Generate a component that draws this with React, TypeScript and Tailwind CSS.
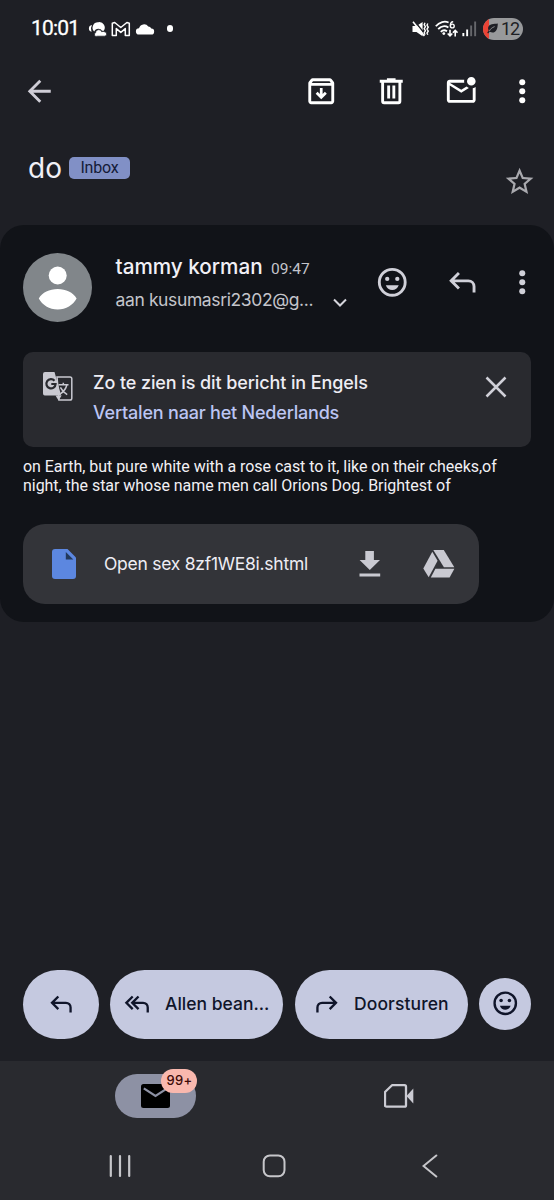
import type { ReactNode } from "react";

interface IconProps {
  size?: number;
  className?: string;
  children: ReactNode;
}

function Icon({ size = 34.5, className = "", children }: IconProps) {
  return (
    <svg width={size} height={size} viewBox="0 0 24 24" fill="currentColor" className={`shrink-0 ${className}`}>
      {children}
    </svg>
  );
}

/* ─── Shared icons ─── */
function MoreIcon() {
  return (
    <Icon>
      <circle cx="12" cy="5.8" r="2.1" />
      <circle cx="12" cy="12" r="2.1" />
      <circle cx="12" cy="18.2" r="2.1" />
    </Icon>
  );
}

function SmileIcon({ size }: { size?: number }) {
  return (
    <Icon size={size}>
      <circle cx="12" cy="12" r="9" fill="none" stroke="currentColor" strokeWidth="2" />
      <circle cx="8.5" cy="9.7" r="1.5" />
      <circle cx="15.5" cy="9.7" r="1.5" />
      <path d="M7.5 14h9c-.7 2-2.4 3.4-4.5 3.4S8.2 16 7.5 14z" />
    </Icon>
  );
}

function ReplyIcon({ size, className }: { size?: number; className?: string }) {
  return (
    <Icon size={size} className={className}>
      <path d="M9.7 5.6 4.3 11l5.4 5.4M4.3 11h11.9c2.3 0 4 1.7 4 4v4.2" fill="none" stroke="currentColor" strokeWidth="2" />
    </Icon>
  );
}

/* ─── Status bar ─── */
function StatusBar() {
  return (
    <div className="flex h-[57px] shrink-0 items-center pl-[31px] pr-[31px] text-white">
      <span className="w-[56.5px] text-[21px] leading-none tracking-[-0.8px] [-webkit-text-stroke:0.3px_white]">10:01</span>
      <svg width="20" height="18" viewBox="0 0 20 18" fill="currentColor" className="shrink-0">
        <path d="M4 5a3.6 3.6 0 0 0-3.1 3.6c0 1.700 1 2.900 2.600 3.300A7.500 7.500 0 0 1 4 5z" />
        <path d="M10.300 2.200a5.500 5.500 0 0 0-4.100 9.400c.600-1.700 2.200-2.900 4.200-2.900 1.600 0 3 .900 3.600 2.200.500-.100 1.100 0 1.500.200a5.500 5.500 0 0 0-5.200-8.900z" />
        <path d="M9.300 16.200h7a2.200 2.200 0 0 0 .300-4.400c-.900-.500-2-.500-2.900-.100a3.200 3.200 0 0 0-6.200 1.100 1.900 1.900 0 0 0 1.800 3.400z" stroke="#1e1f25" strokeWidth=".700" />
      </svg>
      <svg width="20" height="18" viewBox="0 0 20 18" fill="none" stroke="currentColor" strokeWidth="1.5" strokeLinejoin="round" className="ml-[3px] shrink-0">
        <path d="M1.300 3.200v12.200h4V8.600l4.500 3.800 4.500-3.800v6.800h4V3.200l-2.400-.700-6.100 5-6.100-5z" />
      </svg>
      <svg width="20" height="18" viewBox="0 0 20 18" fill="currentColor" className="ml-[4px] shrink-0">
        <path d="M4 14.500h12a3 3 0 0 0 .300-6 3.500 3.500 0 0 0-3-1.900A5.200 5.200 0 0 0 4 8.300a3.100 3.100 0 0 0 0 6.200z" />
      </svg>
      <span className="ml-[12px] size-[6.5px] rounded-full bg-white" />

      <div className="ml-auto flex items-center">
        <svg width="17" height="16" viewBox="0 0 17 16" fill="currentColor" className="shrink-0">
          <path d="M.5 5h4l6.100-4v14.200L4.500 11h-4z" />
          <path d="M2.500 0 14 14.500" stroke="#1e1f25" strokeWidth="1.400" />
          <path d="M1 .8 12.400 15" stroke="currentColor" strokeWidth="1.600" />
          <path d="m13 1.800-.800 1.900 1.200 2-1.200 2 1.200 2-1.200 2 .800 2M15.800 2.500l-.800 1.600 1.200 2-1.200 2 1.200 2-1.200 2 .800 1.600" fill="none" stroke="currentColor" strokeWidth="1.400" />
        </svg>
        <svg width="23" height="18" viewBox="0 0 23 18" fill="none" stroke="currentColor" strokeWidth="1.8" className="ml-[6px] shrink-0">
          <path d="M.8 6.2C4.4 1.8 9.8.8 13.6 2.5M3.2 9.1c2.8-3.2 7-3.7 10.2-1.7M5.8 11.8c1.8-1.8 4.3-1.9 6.2-.6" />
          <circle cx="8.8" cy="13.6" r="1.4" fill="currentColor" stroke="none" />
          <path d="M18.2 1.8c-2 0-3 1.7-2.8 4" strokeWidth="1.4" />
          <circle cx="17.3" cy="6" r="1.9" strokeWidth="1.4" />
          <path d="M15 9.800v6M12.700 13.500l2.300 2.400 2.300-2.400M20.200 16.500v-6M17.900 12.700l2.300-2.400 2.300 2.400" strokeWidth="1.600" />
        </svg>
        <svg width="15" height="16" viewBox="0 0 15 16" fill="currentColor" className="ml-[4px] shrink-0">
          <rect x=".4" y="12" width="1.900" height="3.200" />
          <rect x="4.200" y="8.500" width="1.900" height="6.700" />
          <rect x="8.200" y="4.500" width="1.900" height="10.700" fill="#66676b" />
          <rect x="12.200" y=".5" width="1.900" height="14.700" fill="#66676b" />
        </svg>
        <div className="ml-[6px] flex h-[22px] w-[40px] items-center overflow-hidden rounded-full bg-[#98999b]">
          <span className="h-full w-[6px] shrink-0 bg-[#ea4335]" />
          <svg width="11" height="11" viewBox="0 0 11 11" className="-ml-[2px] shrink-0" fill="#1e1f25">
            <path d="M10.8.4C7 1 2 .5 1.2 4.3c-.3 1.3 0 2.3.5 3L.2 9.8l1 .8 1.5-1.8c4.9 2 8-.8 8.1-8.4z" />
            <path d="M2.3 8.2C3.2 6 5 4.6 7.6 3.6" stroke="#98999b" strokeWidth=".9" fill="none" />
          </svg>
          <span className="ml-[3px] pt-px text-[18px] leading-none tracking-[-1.2px] text-[#1e1f25]">12</span>
        </div>
      </div>
    </div>
  );
}

/* ─── Toolbar ─── */
function Toolbar() {
  return (
    <header className="flex h-[69px] shrink-0 items-center pl-[22px] pr-[14.5px] text-white">
      <Icon className="text-[#cfcdd6]">
        <path d="M20 11H7.83l5.59-5.59L12 4l-8 8 8 8 1.41-1.41L7.83 13H20v-2z" />
      </Icon>
      <div className="ml-auto flex items-center">
        <Icon>
          <path
            fillRule="evenodd"
            d="M20.54 5.23l-1.39-1.68C18.88 3.21 18.47 3 18 3H6c-.47 0-.88.21-1.16.55L3.46 5.23C3.17 5.57 3 6.02 3 6.5V19c0 1.1.9 2 2 2h14c1.1 0 2-.9 2-2V6.5c0-.48-.17-.93-.46-1.27zM6.24 5h11.52l.83 1.2H5.42L6.24 5zM5 19V8.2h14V19H5z"
          />
          <path d="M12 9.8v6M8.8 13l3.200 3.200 3.200-3.200" fill="none" stroke="currentColor" strokeWidth="1.900" />
        </Icon>
        <Icon className="ml-[35.3px]">
          <path d="M9 3h6v1h5v2H4V4h5z" />
          <path d="M6 5.500V19c0 .600.400 1 1 1h10c.600 0 1-.400 1-1V5.500M10.200 8v9M13.800 8v9" fill="none" stroke="currentColor" strokeWidth="2" />
        </Icon>
        <Icon className="ml-[35.5px]">
          <path d="M22 8.98V18c0 1.1-.9 2-2 2H4c-1.1 0-2-.9-2-2V6c0-1.1.9-2 2-2h10.1c-.06.32-.1.66-.1 1s.04.68.1 1H4l8 5 3.67-2.29c.47.43 1.02.76 1.63.98L12 13 4 8v10h16V9.9c.74-.15 1.42-.48 2-.92zM16 5c0 1.66 1.34 3 3 3s3-1.34 3-3-1.34-3-3-3-3 1.34-3 3z" />
        </Icon>
        <div className="ml-[26.7px]">
          <MoreIcon />
        </div>
      </div>
    </header>
  );
}

function Subject() {
  return (
    <div className="flex h-[99px] shrink-0 items-start pl-[28px] pr-[18px]">
      <h1 className="mt-[24px] w-[41px] font-[Inter] text-[28px] leading-[36px] text-[#f1f0f6]">do</h1>
      <span className="mt-[31px] flex h-[22px] w-[61px] items-center justify-center rounded-[5px] bg-[#8190c6] text-[16px] tracking-[-0.2px] text-[#151b38]">
        Inbox
      </span>
      <Icon size={33.2} className="mt-[39px] ml-auto text-[#a9a9ae]">
        <path d="M22 9.24l-7.19-.62L12 2 9.19 8.63 2 9.24l5.46 4.73L5.82 21 12 17.27 18.18 21l-1.63-7.03L22 9.24zM12 15.4l-3.76 2.27 1-4.28-3.32-2.88 4.38-.38L12 6.1l1.71 4.04 4.38.38-3.32 2.88 1 4.28L12 15.4z" />
      </Icon>
    </div>
  );
}

/* ─── Message card ─── */
function SenderRow() {
  return (
    <div className="flex h-[69px] items-start">
      <svg width="69" height="69" viewBox="0 0 69 69" className="shrink-0">
        <circle cx="34.5" cy="34.5" r="34.5" fill="#81868a" />
        <circle cx="34.7" cy="22.5" r="9" fill="#fff" />
        <path d="M15.8 45.5c3.4-6 10.6-9.5 18.9-9.5s15.5 3.5 18.9 9.5c-3.4 6.4-10.6 11-18.900 11s-15.500-4.600-18.900-11z" fill="#fff" />
      </svg>
      <div className="ml-[23.5px] w-[234px] pt-[1px] whitespace-nowrap">
        <div className="flex h-[25px] items-baseline">
          <span className="w-[155.5px] font-[Inter] text-[20.7px] leading-[25px] font-medium text-[#f1f0f6]">tammy korman</span>
          <span className="text-[15.5px] text-[#c4c5cb]">09:47</span>
        </div>
        <div className="mt-[9px] flex items-center">
          <span className="w-[213.5px] font-[Inter] text-[17.5px] leading-[24px] tracking-[-0.38px] text-[#c4c5cb]">aan kusumasri2302@g...</span>
          <svg width="16" height="10" viewBox="0 0 16 10" fill="none" stroke="#d5d5dc" strokeWidth="2" className="mt-[5px] ml-[3px] shrink-0">
            <path d="m2 1.5 6 6 6-6" />
          </svg>
        </div>
      </div>
      <div className="ml-auto flex items-center pt-[12px] text-[#d0d0d8]">
        <SmileIcon />
        <ReplyIcon className="ml-[35.5px]" />
        <div className="ml-[26px]">
          <MoreIcon />
        </div>
      </div>
    </div>
  );
}

function TranslateBanner() {
  return (
    <div className="mr-[8.5px] flex h-[95px] rounded-[10px] bg-[#292a2f]">
      <svg width="30" height="30" viewBox="0 0 30 30" className="mt-[20px] ml-[20px] shrink-0">
        <path d="M14 5h13c1 0 1.8.8 1.8 1.8v19.4c0 1-.8 1.8-1.8 1.8H16z" fill="none" stroke="#c9c9d1" strokeWidth="1.5" />
        <path d="M2 0h9.500l6.700 23.500h-16A2 2 0 0 1 0 21.500V2a2 2 0 0 1 2-2z" fill="#c9c9d1" />
        <path d="m12.500 23.500 3 5 3.200-5z" fill="#c9c9d1" />
        <path d="M11.500 8.800A4.600 4.600 0 1 0 12.600 12H8.300" fill="none" stroke="#292a2f" strokeWidth="2.200" />
        <path d="M15.500 12.800h10M20.300 10.800v2M23.800 13c-.8 4-3.8 7-6.600 9M17.400 15.400c1.200 2.600 4 5.400 6.800 7.200" fill="none" stroke="#c9c9d1" strokeWidth="1.5" />
      </svg>
      <div className="ml-[20px] pt-[16px] font-[Inter] text-[18px] leading-[30px] font-medium whitespace-nowrap">
        <p className="tracking-[-0.1px] text-[#eeedf4]">Zo te zien is dit bericht in Engels</p>
        <p className="tracking-[-0.2px] text-[#bcc5f3]">Vertalen naar het Nederlands</p>
      </div>
      <svg width="22" height="22" viewBox="0 0 22 22" fill="none" stroke="#d0d0d8" strokeWidth="2.5" className="mt-[24px] mr-[24.5px] ml-auto shrink-0">
        <path d="m1.5 1.5 19 19m0-19-19 19" />
      </svg>
    </div>
  );
}

function Attachment() {
  return (
    <div className="mt-[29px] flex h-[80px] w-[456px] items-center rounded-[22px] bg-[#333439]">
      <svg width="24" height="30" viewBox="0 0 24 30" className="ml-[28.5px] shrink-0">
        <path d="M3 0h12.5L24 8.5V27a3 3 0 0 1-3 3H3a3 3 0 0 1-3-3V3a3 3 0 0 1 3-3z" fill="#5c87e0" />
        <path d="M13.8 3v7.500h7.500z" fill="#23395c" />
      </svg>
      <span className="ml-[28.5px] w-[250px] font-[Inter] text-[17.5px] tracking-[-0.26px] whitespace-nowrap text-[#eeedf4]">
        Open sex 8zf1WE8i.shtml
      </span>
      <svg width="22" height="26" viewBox="0 0 22 26" fill="#c9c9d1" className="ml-[4.5px] shrink-0">
        <path d="M6.300 0h8.600v9H21L10.800 19 .600 9h5.700zM.500 22.400h20.700v3.100H.500z" />
      </svg>
      <svg width="32" height="28" viewBox="0 0 32 28" fill="#c9c9d1" className="ml-[42px] shrink-0">
        <path d="M10.300 0h10.500l10.500 17.300H20.900z" />
        <path d="M9.300 1.700 14.600 10.700 5.700 27.300.300 18.500z" />
        <path d="M12.400 18.700h19L26.600 27.500H7.800z" />
      </svg>
    </div>
  );
}

/* ─── Bottom actions ─── */
function ReplyActions() {
  return (
    <div className="flex h-[69px] shrink-0 items-center px-[23px] font-[Inter] text-[17.5px] font-medium text-[#10152a]">
      <button className="flex h-full w-[76px] items-center justify-center rounded-full bg-[#c5c9e0]">
        <ReplyIcon size={28} />
      </button>
      <button className="ml-[11px] flex h-full w-[173px] items-center rounded-full bg-[#c5c9e0] pl-[13px] whitespace-nowrap">
        <svg width="28" height="28" viewBox="0 0 24 24" fill="none" stroke="currentColor" strokeWidth="2" className="shrink-0">
          <path d="M8.300 5.600 2.900 11l5.400 5.400M13.300 5.600 7.900 11l5.400 5.400M7.900 11h9.300c2.300 0 4 1.700 4 4v4.200" />
        </svg>
        <span className="ml-[14px]">Allen bean...</span>
      </button>
      <button className="ml-[11.5px] flex h-full w-[173.5px] items-center rounded-full bg-[#c5c9e0] pl-[18.5px]">
        <ReplyIcon size={28} className="-scale-x-100" />
        <span className="ml-[13px] tracking-[0.1px]">Doorsturen</span>
      </button>
      <button className="mb-px ml-[11px] flex size-[52px] items-center justify-center rounded-full bg-[#c5c9e0]">
        <SmileIcon size={28.5} />
      </button>
    </div>
  );
}

function BottomNav() {
  return (
    <nav className="mt-[22.5px] flex h-[139px] shrink-0 flex-col bg-[#292a2f]">
      <div className="flex pt-[13px]">
        <div className="relative ml-[115px] flex h-[43.5px] w-[81px] items-center justify-center rounded-full bg-[#8d91a4]">
          <svg width="29" height="24" viewBox="0 0 29 24">
            <rect width="29" height="24" rx="2.5" fill="#000" />
            <path d="m2.800 4.300 11.700 7.700 11.700-7.700" fill="none" stroke="#8d91a4" strokeWidth="2.200" />
          </svg>
          <span className="absolute -top-[5px] left-[46px] flex h-[24px] w-[36px] items-center justify-center rounded-full bg-[#f9b8ae] pl-px font-[Inter] text-[13px] font-medium tracking-[0.3px] text-[#3d0a08]">
            99+
          </span>
        </div>
        <svg width="30" height="24" viewBox="0 0 30 24" className="mt-[9.5px] ml-[188px] text-[#cbcbd3]">
          <path d="M8 1.200h12.500c.9 0 1.500.6 1.500 1.500v18.500c0 .9-.6 1.500-1.500 1.500h-18c-.9 0-1.500-.6-1.500-1.500V8z" fill="none" stroke="currentColor" strokeWidth="2.300" strokeLinejoin="round" />
          <path d="m22.500 12 6.800-7.500v15z" fill="currentColor" />
        </svg>
      </div>

      {/* System navigation */}
      <div className="mt-[36px] flex h-[24px] items-center text-[#c6c6ca]">
        <svg width="22" height="24" viewBox="0 0 22 24" fill="none" stroke="currentColor" strokeWidth="2.2" strokeLinecap="round" className="ml-[108.5px]">
          <path d="M1.800 2v20M11 2v20M20.200 2v20" />
        </svg>
        <svg width="24" height="24" viewBox="0 0 24 24" fill="none" stroke="currentColor" strokeWidth="2" className="ml-[131.5px]">
          <rect x="1.7" y="1.5" width="20.8" height="20.8" rx="6.2" />
        </svg>
        <svg width="16" height="24" viewBox="0 0 16 24" fill="none" stroke="currentColor" strokeWidth="2" strokeLinecap="round" className="ml-[136px]">
          <path d="M14.300 1.500 1.500 12l12.800 10.500" />
        </svg>
      </div>
    </nav>
  );
}

export default function App() {
  return (
    <div className="flex h-[1200px] w-[554px] flex-col overflow-hidden bg-[#1e1f25] font-[Roboto,sans-serif]">
      <StatusBar />
      <Toolbar />
      <Subject />
      <main className="h-[397px] shrink-0 rounded-[24px] bg-[#111318] pt-[28px] pr-[14.5px] pl-[23px]">
        <SenderRow />
        <div className="mt-[30px]">
          <TranslateBanner />
        </div>
        <p className="mt-[10px] text-[16px] leading-[19px] tracking-[-0.04px] whitespace-nowrap text-[#f1f0f4]">
          on Earth, but pure white with a rose cast to it, like on their cheeks,of
          <br />
          night, the star whose name men call Orions Dog. Brightest of
        </p>
        <Attachment />
      </main>
      <div className="flex-1" />
      <ReplyActions />
      <BottomNav />
    </div>
  );
}
